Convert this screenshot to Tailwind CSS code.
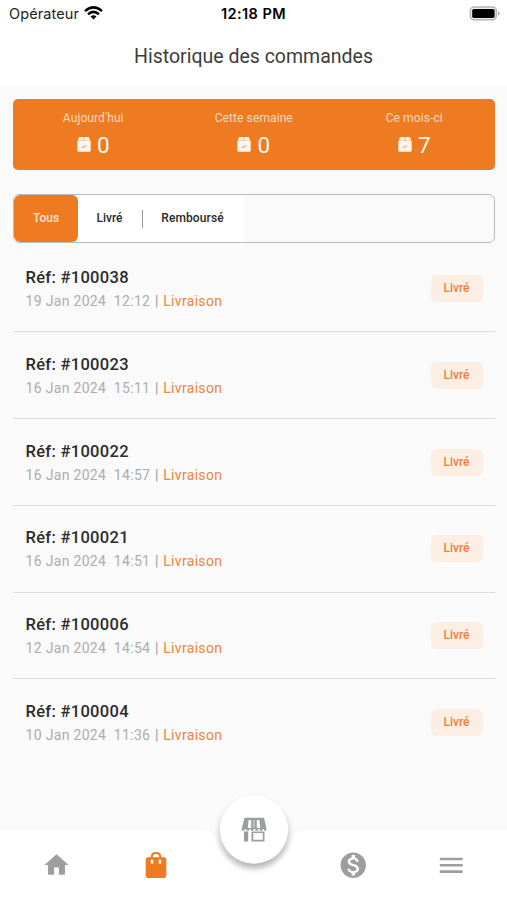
<!DOCTYPE html>
<html lang="fr">
<head>
<meta charset="utf-8">
<title>Historique des commandes</title>
<script src="https://cdn.jsdelivr.net/npm/@tailwindcss/browser@4"></script>
</head>
<body class="bg-[#fafafa]">
<svg class="hidden">
  <symbol id="pack" viewBox="0 0 14 15"><path fill="currentColor" d="M3 0h3.700v3.800H.7L1.600 1.200Q2 0 3 0zM7.300 0H11q1 0 1.400 1.200l.9 2.600H7.300zM.3 4.100h13.400V13.500q0 1.300-1.300 1.300H1.600Q.3 14.800.3 13.500z"/><path d="M5 9.500l1.400 1.300 2.600-2.600" fill="none" stroke="#ee7a22" stroke-width=".9"/></symbol>
</svg>
<div class="w-[507px] h-[900px] flex flex-col overflow-hidden bg-[#fafafa] font-[Roboto,sans-serif]">
  <header class="h-[86px] bg-white shrink-0 shadow-[0_0_3px_rgba(0,0,0,0.02)]">
    <div class="h-7 grid grid-cols-3 items-center pl-[9px] pr-[7px] font-[Inter,sans-serif] text-black">
      <div class="flex items-center gap-[5px] text-[14.500px] text-[#222]"><span class="tracking-[0.100px]">Opérateur</span>
        <svg class="w-[19px] h-[14px] -mt-[2px]" viewBox="0 0 19 14" fill="none" stroke="#000" stroke-width="2.500"><path d="M1 5.100Q9.500-2.400 18 5.100M4 8.300Q9.500 3.500 15 8.300"/><path d="M6.500 10.500Q9.500 8 12.500 10.500L9.500 13.600z" fill="#000" stroke="none"/></svg>
      </div>
      <div class="text-center text-[14.500px] -ml-[2px] font-semibold tracking-[0.450px]">12:18 PM</div>
      <svg class="justify-self-end w-[31px] h-[15px] -mt-[2px]" viewBox="0 0 31 15"><rect x="1.300" y="1" width="26" height="12.800" rx="3.800" fill="#eee" stroke="#b5b5b5" stroke-width="1.400"/><rect x="3.200" y="2.900" width="22.400" height="9" rx="1.600"/><path d="M29 5.300q1.700.7 1.700 2.200T29 9.700z" fill="#aaa"/></svg>
    </div>
    <h1 class="text-center h-[58px] leading-[58px] text-[19.500px] text-[#3c3c3c]">Historique des commandes</h1>
  </header>

  <main class="px-[13px] pt-[12.500px] flex-1">
    <section class="h-[71px] w-[481.500px] rounded-[5px] bg-[#ee7a22] grid grid-cols-3 text-center pt-[11px]">
      <div><p class="text-[12px] leading-4 text-[#fcd9bd] tracking-[0.100px]">Aujourd'hui</p><p class="flex justify-center items-center gap-[6px] mt-[6px] text-[22.500px] leading-[26px] text-[#fff7ef]"><svg class="w-[14px] h-[15px]"><use href="#pack"/></svg>0</p></div>
      <div><p class="text-[12px] leading-4 text-[#fcd9bd] tracking-[0.100px]">Cette semaine</p><p class="flex justify-center items-center gap-[6px] mt-[6px] text-[22.500px] leading-[26px] text-[#fff7ef]"><svg class="w-[14px] h-[15px]"><use href="#pack"/></svg>0</p></div>
      <div><p class="text-[12px] leading-4 text-[#fcd9bd] tracking-[0.100px]">Ce mois-ci</p><p class="flex justify-center items-center gap-[6px] mt-[6px] text-[22.500px] leading-[26px] text-[#fff7ef]"><svg class="w-[14px] h-[15px]"><use href="#pack"/></svg>7</p></div>
    </section>

    <nav class="mt-[24.500px] h-[49px] w-[481.500px] rounded-[6px] border-[1.500px] border-[#b9bbbb] overflow-hidden flex text-[12px] font-medium text-[#292929]">
      <div class="w-[64px] bg-white"><div class="h-full rounded-[6px] bg-[#ee7a22] text-[#fde6d3] flex items-center justify-center pb-[2px]">Tous</div></div>
      <div class="w-[64px] bg-white flex items-center justify-center pb-[2px] pr-[1px]">Livré</div>
      <div class="w-[102px] bg-white flex items-center"><i class="w-px h-[18px] bg-[#999]"></i><span class="flex-1 text-center pb-[2px] pr-[2px] tracking-[0.100px]">Remboursé</span></div>
    </nav>
    <div id="orders" class="w-[482px] pt-[2.500px]"></div>
  </main>

  <footer class="relative h-[70.500px] shrink-0">
    <svg class="absolute left-0 -top-[40px] w-[507px] h-[111px]" viewBox="0 0 507 111">
      <defs><filter id="sh" x="-50%" y="-50%" width="200%" height="200%"><feGaussianBlur stdDeviation="3.500"/></filter></defs>
      <path fill="#fff" d="M0 40H204Q213 40 216 50A39 39 0 0 0 292 50Q295 40 304 40H507V111H0z"/>
      <circle cx="254" cy="44" r="33.500" fill="#000" opacity=".32" filter="url(#sh)"/>
      <circle cx="254" cy="39.500" r="34.200" fill="#fff"/>
      <g transform="translate(241.500 27)" fill="#9b9e9f">
        <path d="M3 .8h19.500l2.500 11q.1 1.900-1.400 1.900H1.400Q0 13.700.3 11.800z"/>
        <path d="M7.200 3h2.500v8H6.200zM15.300 3h2.500l1 8h-3.500z" fill="#fff"/>
        <path d="M12.500 3v8" stroke="#ddd"/>
        <path d="M3 13.200h2M7.500 13.200h2M12 13.200h2M16.500 13.200h2M21 13.200h1.500" stroke="#fff" stroke-width="1.800"/>
        <path d="M2.500 14.500H23V24.500H10V14.500H6.700V24.500H2.500zM11.800 16V22.700H21.300V16z" fill-rule="evenodd"/>
      </g>
    </svg>
    <div class="relative h-[70px] grid grid-cols-5 items-center justify-items-center pl-[7.500px] pr-[6px] pt-[1px]">
      <svg class="w-[29px] h-[30px]" viewBox="0 0 24 24" fill="#9e9e9e"><path d="M10 20v-6h4v6h5v-8h3L12 3 2 12h3v8z"/></svg>
      <svg class="w-[22px] h-[28px]" viewBox="0 0 22 28"><path d="M6.800 7V5.500Q7 2 11 2t4.200 3.500V7" fill="none" stroke="#ee7a22" stroke-width="2"/><rect x=".7" y="6.300" width="20.600" height="20.700" rx="2.500" fill="#ee7a22"/><rect x="5.700" y="8.500" width="2.700" height="4.600" rx="1.300" fill="#fff2e5"/><rect x="13.600" y="8.500" width="2.700" height="4.600" rx="1.300" fill="#fff2e5"/></svg>
      <div></div>
      <svg class="w-[30.500px] h-[30.500px]" viewBox="0 0 24 24" fill="#9e9e9e"><path d="M12 2C6.480 2 2 6.480 2 12s4.480 10 10 10 10-4.480 10-10S17.520 2 12 2zm1.410 16.090V20h-2.670v-1.930c-1.710-.36-3.160-1.460-3.270-3.400h1.960c.1 1.050.82 1.870 2.650 1.870 1.960 0 2.400-.98 2.400-1.590 0-.83-.44-1.610-2.670-2.140-2.480-.6-4.180-1.620-4.180-3.670 0-1.720 1.390-2.840 3.110-3.210V4h2.670v1.950c1.860.45 2.790 1.860 2.850 3.390H14.300c-.05-1.110-.64-1.870-2.220-1.870-1.500 0-2.400.68-2.400 1.640 0 .84.65 1.390 2.670 1.910s4.180 1.390 4.180 3.910c-.01 1.830-1.380 2.830-3.120 3.160z"/></svg>
      <svg class="w-[30.500px] h-[30.500px]" viewBox="0 0 24 24" fill="#9e9e9e"><path d="M3 18h18v-2H3v2zm0-5h18v-2H3v2zm0-7v2h18V6H3z"/></svg>
    </div>
  </footer>
</div>
<script>
const orders = [["100038","19 Jan 2024","12:12"],["100023","16 Jan 2024","15:11"],["100022","16 Jan 2024","14:57"],["100021","16 Jan 2024","14:51"],["100006","12 Jan 2024","14:54"],["100004","10 Jan 2024","11:36"]];
document.getElementById("orders").innerHTML = orders.map(([ref, date, time]) => `
<article class="h-[86.750px] border-b border-[#dcdcdc] last:border-0 flex justify-between pl-[12.500px] pr-[12px]">
  <div class="pt-[21.500px]"><p class="text-[16.500px] leading-[22px] font-medium text-[#2b2b2b] tracking-[0.300px]">Réf: #${ref}</p>
  <p class="text-[14px] leading-5 mt-[2px] text-[#adadad] tracking-[0.320px] whitespace-pre">${date}  ${time} <span class="text-[#999] mx-[0.800px]">|</span> <span class="text-[#ec8540]">Livraison</span></p></div>
  <span class="mt-[29.500px] w-[52px] h-[27px] rounded-[6px] bg-[#fceee3] text-[#ea8140] text-[12px] font-medium flex items-center justify-center pr-[1px] pb-[1px]">Livré</span>
</article>`).join("");
</script>
</body>
</html>
